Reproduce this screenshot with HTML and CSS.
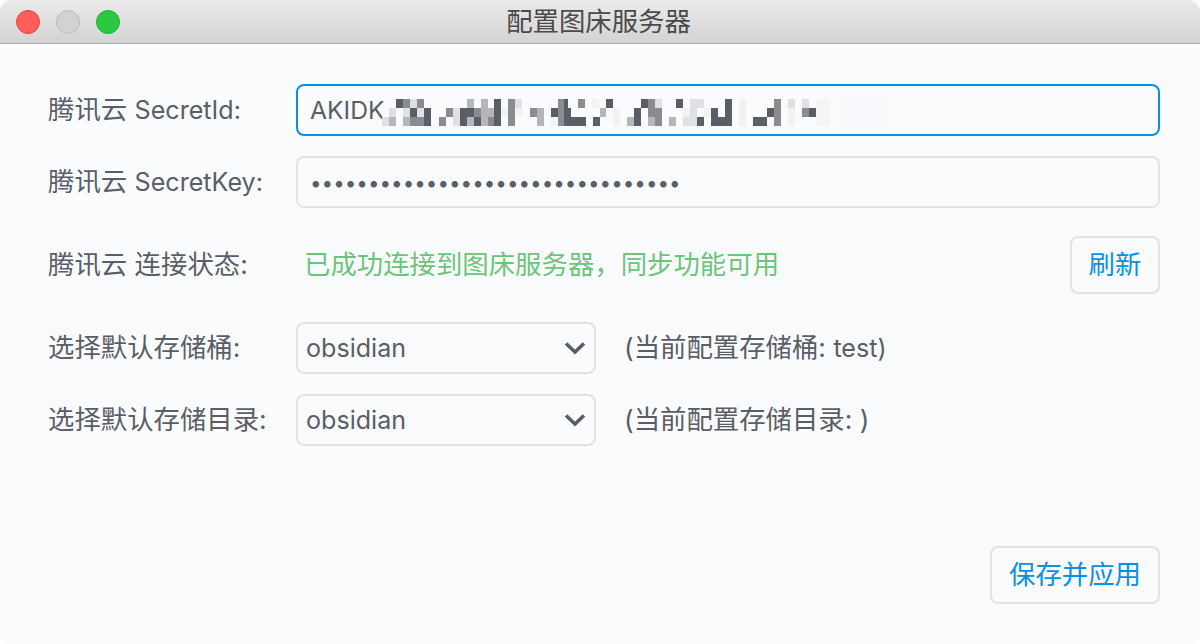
FILE: index.html
```html
<!DOCTYPE html>
<html lang="zh-CN">
<head>
  <meta charset="UTF-8" />
  <title>配置图床服务器</title>
  <link rel="stylesheet" href="styles.css">
</head>
<body>

<div class="window">
  <div class="titlebar">
    <div class="lights">
      <span class="light red"></span>
      <span class="light gray"></span>
      <span class="light green"></span>
    </div>
    <div class="title">配置图床服务器</div>
  </div>

  <div class="content">
    <!-- 腾讯云 key -->
    <div class="row row-first">
      <label class="label">腾讯云 <span class="latin">SecretId:</span></label>
      <div class="input-box">
        <input class="input input-focus" type="text" value="AKIDK">
        <svg class="mosaic" width="540" height="27" viewBox="380 99 540 27">
          <g fill="#5a5e66">
            <rect x="396" y="99" width="7" height="9"/><rect x="561" y="99" width="7" height="9"/><rect x="410" y="108" width="7" height="9"/><rect x="424" y="108" width="7" height="18"/>
            <rect x="494" y="99" width="7" height="9"/><rect x="494" y="108" width="7" height="9"/><rect x="494" y="117" width="7" height="9"/>
            <rect x="460" y="108" width="14" height="9"/><rect x="460" y="117" width="7" height="9"/><rect x="474" y="117" width="7" height="9"/>
            <rect x="551" y="108" width="7" height="9"/><rect x="564" y="108" width="7" height="9"/><rect x="564" y="117" width="22" height="9"/><rect x="593" y="117" width="7" height="9"/>
            <rect x="606" y="99" width="7" height="9"/><rect x="641" y="99" width="7" height="9"/><rect x="634" y="108" width="7" height="9"/><rect x="634" y="117" width="7" height="9"/>
            <rect x="676" y="99" width="7" height="9"/><rect x="697" y="117" width="7" height="9"/><rect x="711" y="108" width="7" height="9"/><rect x="711" y="117" width="14" height="9"/>
            <rect x="725" y="99" width="7" height="27"/><rect x="767" y="108" width="7" height="9"/><rect x="753" y="117" width="14" height="9"/><rect x="809" y="108" width="7" height="9"/>
          </g>
          <g fill="#8a8c92">
            <rect x="403" y="99" width="7" height="9"/><rect x="417" y="99" width="7" height="9"/><rect x="446" y="108" width="7" height="9"/><rect x="439" y="117" width="7" height="9"/>
            <rect x="410" y="117" width="7" height="9"/><rect x="417" y="117" width="7" height="9"/><rect x="474" y="108" width="7" height="9"/><rect x="488" y="117" width="6" height="9"/>
            <rect x="508" y="99" width="7" height="27"/><rect x="530" y="108" width="7" height="9"/><rect x="558" y="99" width="6" height="27"/><rect x="578" y="99" width="7" height="9"/>
            <rect x="648" y="99" width="7" height="18"/><rect x="655" y="108" width="7" height="18"/><rect x="774" y="99" width="7" height="27"/><rect x="802" y="108" width="7" height="9"/>
          </g>
          <g fill="#b4b6ba">
            <rect x="389" y="117" width="7" height="9"/><rect x="403" y="117" width="7" height="9"/><rect x="467" y="99" width="7" height="9"/><rect x="467" y="117" width="7" height="9"/>
            <rect x="481" y="99" width="7" height="9"/><rect x="481" y="108" width="13" height="9"/><rect x="481" y="117" width="7" height="9"/><rect x="537" y="108" width="7" height="18"/>
            <rect x="600" y="108" width="6" height="9"/><rect x="627" y="117" width="7" height="9"/><rect x="669" y="117" width="7" height="9"/><rect x="648" y="117" width="7" height="9"/>
          </g>
          <g fill="#dfe0e3">
            <rect x="382" y="117" width="7" height="9"/><rect x="389" y="108" width="7" height="9"/><rect x="410" y="99" width="7" height="9"/><rect x="403" y="108" width="7" height="9"/><rect x="417" y="108" width="7" height="9"/>
            <rect x="453" y="108" width="7" height="18"/><rect x="515" y="99" width="7" height="9"/><rect x="655" y="99" width="7" height="9"/><rect x="690" y="99" width="7" height="27"/>
            <rect x="697" y="99" width="7" height="9"/><rect x="788" y="99" width="7" height="9"/><rect x="802" y="99" width="7" height="9"/><rect x="683" y="117" width="7" height="9"/>
          </g>
          <g fill="#f1f2f4">
            <rect x="515" y="108" width="7" height="9"/><rect x="501" y="108" width="7" height="9"/><rect x="551" y="117" width="7" height="9"/><rect x="592" y="99" width="7" height="9"/>
            <rect x="613" y="108" width="7" height="18"/><rect x="683" y="108" width="7" height="9"/><rect x="704" y="108" width="7" height="9"/><rect x="739" y="99" width="7" height="27"/>
            <rect x="788" y="108" width="7" height="18"/><rect x="816" y="99" width="14" height="27" opacity="0.6"/><rect x="840" y="99" width="48" height="27" opacity="0.12"/>
          </g>
        </svg>
      </div>
    </div>

    <div class="row">
      <label class="label">腾讯云 <span class="latin">SecretKey:</span></label>
      <input class="input input-dots" type="password" value="12345678901234567890123456789012">
    </div>

    <div class="row row-status">
      <label class="label">腾讯云 连接状态:</label>
      <div class="status">已成功连接到图床服务器，同步功能可用</div>
      <button class="btn btn-small">刷新</button>
    </div>

    <div class="row row-bucket">
      <label class="label">选择默认存储桶:</label>
      <div class="select">
        <span>obsidian</span>
        <svg width="22" height="14" viewBox="0 0 22 14"><path d="M2 2.5 11 11 20 2.5" fill="none" stroke="#5a5e66" stroke-width="3.6"/></svg>
      </div>
      <div class="hint">(当前配置存储桶: <span class="latin">test)</span></div>
    </div>

    <div class="row">
      <label class="label">选择默认存储目录:</label>
      <div class="select">
        <span>obsidian</span>
        <svg width="22" height="14" viewBox="0 0 22 14"><path d="M2 2.5 11 11 20 2.5" fill="none" stroke="#5a5e66" stroke-width="3.6"/></svg>
      </div>
      <div class="hint">(当前配置存储目录: )</div>
    </div>

    <div class="footer">
      <button class="btn btn-save">保存并应用</button>
    </div>
  </div>
</div>

</body>
</html>
```

FILE: styles.css
```css
body {
  margin: 0;
  background: #fff;
  font-family: Inter, "Noto Sans CJK SC", sans-serif;
  color: #5a5e66;
  font-size: 26.4px;
}
.latin {
  font-size: 25.1px;
}
.window {
  width: 1200px;
  height: 644px;
  background: #fafbfd;
  border-radius: 12px;
  overflow: hidden;
  display: flex;
  flex-direction: column;
}
.titlebar {
  height: 43px;
  flex: none;
  background: linear-gradient(#ebebeb, #d3d3d3);
  border-bottom: 1px solid #acacac;
  display: flex;
  align-items: center;
  position: relative;
}
.lights {
  display: flex;
  gap: 16px;
  padding-left: 16px;
}
.light {
  width: 24px;
  height: 24px;
  border-radius: 50%;
  box-sizing: border-box;
  border: 1px solid transparent;
}
.red { background: #ff5f57; border-color: #e5443c; }
.gray { background: #d2d2d2; border-color: #bcbcbc; }
.green { background: #28c940; border-color: #1fae33; }
.title {
  position: absolute;
  left: 0;
  right: 3px;
  text-align: center;
  color: #4a4a4a;
  line-height: 47px;
}
.content {
  flex: 1;
  padding: 40px 40px 40px 48px;
  display: flex;
  flex-direction: column;
  gap: 20px;
}
.row {
  display: flex;
  align-items: center;
}
.label {
  width: 248px;
  flex: none;
  white-space: nowrap;
  padding-bottom: 5px;
}
.input-box {
  flex: 1;
  position: relative;
  display: flex;
}
.input {
  flex: 1;
  height: 52px;
  box-sizing: border-box;
  border: 2px solid #e0e2e6;
  border-radius: 8px;
  background: transparent;
  padding: 0 12px;
  font: inherit;
  font-size: 24.7px;
  color: inherit;
  outline: none;
}
.input-focus {
  border-color: #0a8fe4;
}
.input-dots {
  font-size: 20.6px;
}
.mosaic {
  position: absolute;
  left: 84px;
  top: 15px;
}
.row-status {
  margin-top: 8px;
  margin-bottom: 8px;
}
.status {
  flex: 1;
  padding: 0 0 5px 8px;
  color: #6cc47a;
}
.btn {
  background: transparent;
  border: 2px solid #e0e2e6;
  border-radius: 8px;
  color: #0a8fe4;
  font: inherit;
  height: 58px;
  padding: 0 0 5px;
}
.btn-small { width: 90px; }
.btn-save { width: 170px; }
.select {
  width: 300px;
  height: 52px;
  box-sizing: border-box;
  border: 2px solid #e0e2e6;
  border-radius: 8px;
  padding: 0 8px;
  display: flex;
  align-items: center;
  justify-content: space-between;
  font-size: 25.1px;
}
.hint {
  margin-left: 28px;
  padding-bottom: 5px;
}
.footer {
  margin-top: auto;
  display: flex;
  justify-content: flex-end;
}
```
